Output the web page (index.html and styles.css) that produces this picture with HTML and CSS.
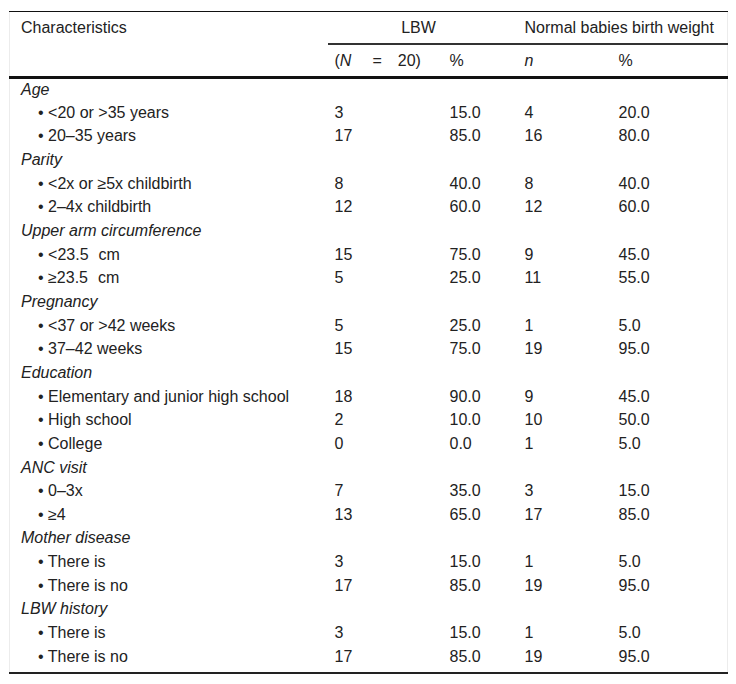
FILE: index.html
```html
<!DOCTYPE html>
<html>
<head>
<meta charset="utf-8">
<link rel="stylesheet" href="styles.css">
</head>
<body>
<table class="tbl">
<colgroup>
<col class="c1"><col class="c2"><col class="c3"><col class="c4"><col class="c5">
</colgroup>
<thead>
<tr class="h1">
<th class="first">Characteristics</th>
<th colspan="2" class="grp center">LBW</th>
<th colspan="2" class="grp">Normal babies birth weight</th>
</tr>
<tr class="h2">
<th class="first"></th>
<th><span class="nn">(<i>N</i></span><span class="eq">=</span><span>20)</span></th>
<th>%</th>
<th><i>n</i></th>
<th>%</th>
</tr>
</thead>
<tbody>
<tr class="firstrow"><td class="cat" colspan="5">Age</td></tr>
<tr><td class="sub">• &lt;20 or &gt;35 years</td><td>3</td><td>15.0</td><td>4</td><td>20.0</td></tr>
<tr><td class="sub">• 20–35 years</td><td>17</td><td>85.0</td><td>16</td><td>80.0</td></tr>
<tr><td class="cat" colspan="5">Parity</td></tr>
<tr><td class="sub">• &lt;2x or ≥5x childbirth</td><td>8</td><td>40.0</td><td>8</td><td>40.0</td></tr>
<tr><td class="sub">• 2–4x childbirth</td><td>12</td><td>60.0</td><td>12</td><td>60.0</td></tr>
<tr><td class="cat" colspan="5">Upper arm circumference</td></tr>
<tr><td class="sub">• &lt;23.5<span class="gap"></span>cm</td><td>15</td><td>75.0</td><td>9</td><td>45.0</td></tr>
<tr><td class="sub">• ≥23.5<span class="gap"></span>cm</td><td>5</td><td>25.0</td><td>11</td><td>55.0</td></tr>
<tr><td class="cat" colspan="5">Pregnancy</td></tr>
<tr><td class="sub">• &lt;37 or &gt;42 weeks</td><td>5</td><td>25.0</td><td>1</td><td>5.0</td></tr>
<tr><td class="sub">• 37–42 weeks</td><td>15</td><td>75.0</td><td>19</td><td>95.0</td></tr>
<tr><td class="cat" colspan="5">Education</td></tr>
<tr><td class="sub">• Elementary and junior high school</td><td>18</td><td>90.0</td><td>9</td><td>45.0</td></tr>
<tr><td class="sub">• High school</td><td>2</td><td>10.0</td><td>10</td><td>50.0</td></tr>
<tr><td class="sub">• College</td><td>0</td><td>0.0</td><td>1</td><td>5.0</td></tr>
<tr><td class="cat" colspan="5">ANC visit</td></tr>
<tr><td class="sub">• 0–3x</td><td>7</td><td>35.0</td><td>3</td><td>15.0</td></tr>
<tr><td class="sub">• ≥4</td><td>13</td><td>65.0</td><td>17</td><td>85.0</td></tr>
<tr><td class="cat" colspan="5">Mother disease</td></tr>
<tr><td class="sub">• There is</td><td>3</td><td>15.0</td><td>1</td><td>5.0</td></tr>
<tr><td class="sub">• There is no</td><td>17</td><td>85.0</td><td>19</td><td>95.0</td></tr>
<tr><td class="cat" colspan="5">LBW history</td></tr>
<tr><td class="sub">• There is</td><td>3</td><td>15.0</td><td>1</td><td>5.0</td></tr>
<tr class="last"><td class="sub">• There is no</td><td>17</td><td>85.0</td><td>19</td><td>95.0</td></tr>
</tbody>
</table>
</body>
</html>
```
FILE: styles.css
```css
html, body {
  margin: 0;
  padding: 0;
  background: #fff;
}
body {
  font-family: "Liberation Sans", Arial, sans-serif;
  font-size: 16px;
  color: #222;
}
.tbl {
  margin: 11px 0 0 9px;
  width: 718px;
  border-collapse: collapse;
  table-layout: fixed;
  border-left: 1px solid #ececec;
  border-right: 1px solid #ececec;
}
.c1 { width: 318px; }
.c2 { width: 115px; }
.c3 { width: 75px; }
.c4 { width: 94px; }
.c5 { width: 116px; }
th, td {
  padding: 0 0 0 7px;
  text-align: left;
  white-space: nowrap;
  font-weight: normal;
}
thead th {
  line-height: 24px;
  padding-top: 4px;
  padding-bottom: 4px;
}
.h1 th {
  border-top: 1px solid #111;
}
.h1 th.grp {
  border-bottom: 2px solid #333;
  padding-bottom: 3px;
}
.h1 th.center {
  text-align: center;
  padding-left: 0;
  padding-right: 8px;
}
.h2 th {
  border-bottom: 3px solid #111;
  padding-bottom: 3px;
}
.h2 th.pct {
  padding-left: 9px;
}
th.first, td.cat {
  padding-left: 11px;
}
.eq {
  display: inline-block;
  margin: 0 16px 0 21px;
}
td {
  line-height: 23.65px;
}
.firstrow td {
  line-height: 21.65px;
}
td.cat {
  font-style: italic;
}
td.sub {
  padding-left: 28px;
}
.gap {
  display: inline-block;
  width: 10px;
}
tr.last td {
  border-bottom: 2px solid #222;
  padding-bottom: 4px;
}
```
